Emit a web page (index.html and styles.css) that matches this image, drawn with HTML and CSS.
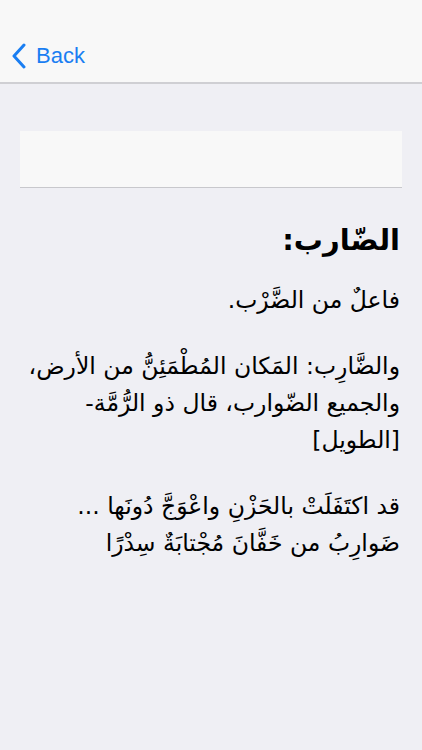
FILE: index.html
```html
<!DOCTYPE html>
<html lang="ar">
<head>
    <meta charset="UTF-8">
    <meta name="viewport" content="width=device-width, initial-scale=1.0">
    <title>الضارب</title>
    <link rel="stylesheet" href="styles.css">
</head>
<body>
    <div class="navbar">
        <a class="back-btn" href="#">
            <svg class="chevron" width="16" height="26" viewBox="0 0 16 26">
                <path d="M13 2 L3 13 L13 24" fill="none" stroke="#1a7ef2" stroke-width="3" stroke-linecap="round" stroke-linejoin="round"/>
            </svg>
            <span>Back</span>
        </a>
    </div>
    <div class="content">
        <div class="search-box"></div>
        <div class="entry" dir="rtl">
            <h1 class="entry-title">الضّارب:</h1>
            <p>فاعلٌ من الضَّرْب.</p>
            <p>والضَّارِب: المَكان المُطْمَئِنُّ من الأرض، والجميع الضّوارب، قال ذو الرُّمَّة-<br>[الطويل]</p>
            <p>قد اكتَفَلَتْ بالحَزْنِ واعْوَجَّ دُونَها ...<br>ضَوارِبُ من خَفَّانَ مُجْتابَةٌ سِدْرًا</p>
        </div>
    </div>
</body>
</html>
```

FILE: styles.css
```css
body {
    margin: 0;
    font-family: "DejaVu Sans", sans-serif;
    background-color: #efeff4;
    height: 750px;
}

.navbar {
    height: 84px;
    background-color: #f8f8f8;
    border-bottom: 2px solid #cfcfd3;
    display: flex;
    align-items: flex-end;
    box-sizing: border-box;
}

.back-btn {
    display: flex;
    align-items: center;
    gap: 9px;
    padding: 0 0 13px 11px;
    color: #1a7ef2;
    text-decoration: none;
    font-family: "Liberation Sans", Arial, sans-serif;
    font-size: 22px;
}

.content {
    padding: 47px 20px 0 20px;
}

.search-box {
    height: 56px;
    background-color: #f8f8f8;
    border-bottom: 1px solid #c8c8cc;
}

.entry {
    padding: 0 2px 0 0;
    margin-left: -4px;
    color: #000;
}

.entry-title {
    margin: 35px 0 25px 0;
    font-size: 29px;
    font-weight: bold;
}

.entry p {
    margin: 0 0 29px 0;
    font-size: 23.5px;
    line-height: 37px;
}
```
